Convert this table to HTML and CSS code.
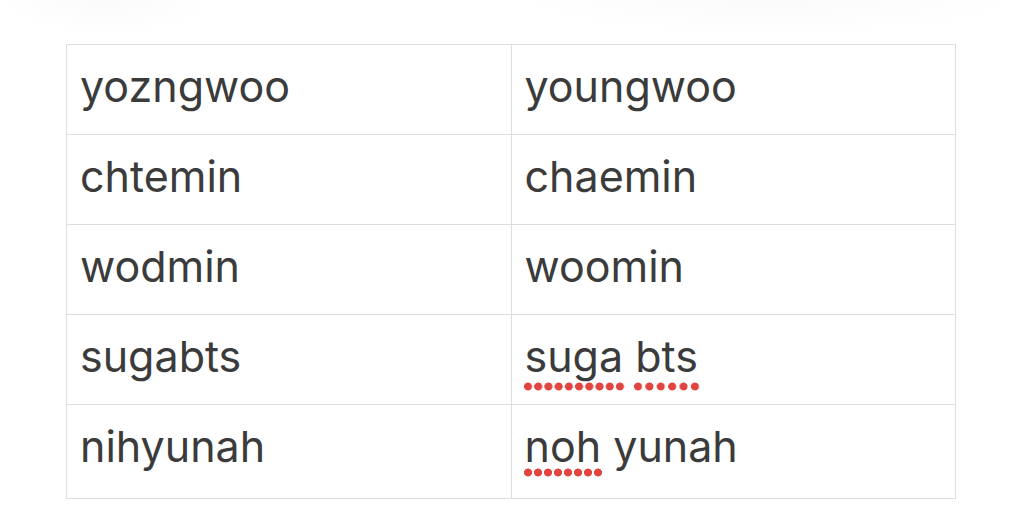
FILE: index.html
```html
<!DOCTYPE html>
<html>
<head>
<meta charset="utf-8">
<link rel="stylesheet" href="styles.css">
</head>
<body>
<div class="page">
  <div class="shade">
    <div class="blob blob-a"></div>
    <div class="blob blob-b"></div>
  </div>
  <table class="words">
    <tr><td>yozngwoo</td><td>youngwoo</td></tr>
    <tr><td>chtemin</td><td>chaemin</td></tr>
    <tr><td>wodmin</td><td>woomin</td></tr>
    <tr><td>sugabts</td><td><span class="spell spell-low">suga</span> <span class="spell spell-low">bts</span></td></tr>
    <tr class="last"><td>nihyunah</td><td><span class="spell spell-high">noh</span> yunah</td></tr>
  </table>
</div>
</body>
</html>
```
FILE: styles.css
```css
html, body {
  margin: 0;
  padding: 0;
  background: #ffffff;
}
.page {
  position: relative;
  width: 1024px;
  height: 529px;
  overflow: hidden;
  padding-top: 44px;
  box-sizing: border-box;
}
.shade {
  position: absolute;
  left: 0;
  top: 0;
  width: 1024px;
  height: 44px;
}
.blob {
  position: absolute;
  top: -40px;
  height: 76px;
  border-radius: 50%;
  background: radial-gradient(ellipse at center, rgba(0,0,0,0.018), rgba(0,0,0,0) 70%);
}
.blob-a { left: -10px; width: 230px; }
.blob-b { left: 500px; width: 540px; }
.words {
  margin-left: 66px;
  width: 890px;
  border-collapse: collapse;
  table-layout: fixed;
  font-family: "Inter", "Liberation Sans", sans-serif;
  font-size: 43px;
  color: #3b3b3b;
}
.words td {
  border: 1px solid #dedede;
  height: 90px;
  padding: 0 0 6px 13px;
  box-sizing: border-box;
  vertical-align: middle;
  line-height: 1;
}
.words tr.last td {
  height: 94px;
  padding-bottom: 10px;
}
.spell {
  padding-left: 2px;
  padding-right: 2px;
  margin: 0 -2px;
  background-image: radial-gradient(circle, #e2443f 3.7px, rgba(226,68,63,0) 4.3px);
  background-size: 10px 9px;
  background-repeat: space no-repeat;
  background-position: 0 100%;
}
.spell-low { padding-bottom: 9px; }
.spell-high { padding-bottom: 5px; }
```
